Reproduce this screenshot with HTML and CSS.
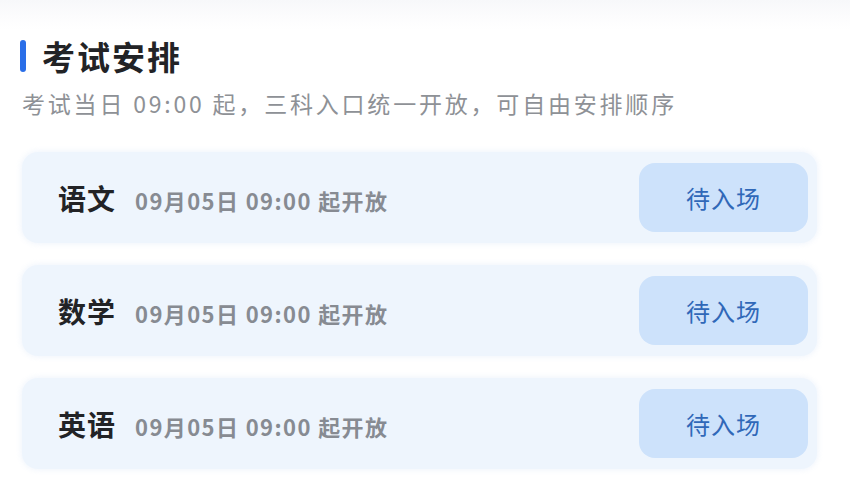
FILE: index.html
```html
<!DOCTYPE html>
<html lang="zh-CN">
<head>
<meta charset="utf-8">
<link rel="stylesheet" href="styles.css">
</head>
<body>
<div class="page">
  <div class="header">
    <span class="bar"></span>
    <h1 class="title">考试安排</h1>
  </div>
  <p class="subtitle">考试当日 09:00 起，三科入口统一开放，可自由安排顺序</p>
  <div class="list">
    <div class="card">
      <div class="info"><span class="subject">语文</span><span class="time">09月05日 09:00 起开放</span></div>
      <div class="btn">待入场</div>
    </div>
    <div class="card">
      <div class="info"><span class="subject">数学</span><span class="time">09月05日 09:00 起开放</span></div>
      <div class="btn">待入场</div>
    </div>
    <div class="card">
      <div class="info"><span class="subject">英语</span><span class="time">09月05日 09:00 起开放</span></div>
      <div class="btn">待入场</div>
    </div>
  </div>
</div>
</body>
</html>
```
FILE: styles.css
```css
html, body {
  margin: 0;
  padding: 0;
}
body {
  width: 850px;
  height: 478px;
  overflow: hidden;
  background: linear-gradient(180deg, #f7f8fa 0px, #fcfcfd 16px, #ffffff 30px);
  font-family: "Noto Sans CJK SC", "Noto Sans", sans-serif;
}
.page {
  padding: 40px 33px 0 20px;
}
.header {
  display: flex;
  align-items: center;
  gap: 16px;
  height: 32px;
}
.bar {
  width: 6px;
  height: 32px;
  border-radius: 3px;
  background: #2a6ee8;
}
.title {
  margin: 0;
  font-size: 33px;
  line-height: 32px;
  font-weight: 700;
  color: #222326;
  letter-spacing: 2px;
}
.subtitle {
  margin: 16px 0 0 2px;
  font-size: 23px;
  line-height: 30px;
  color: #8e9196;
  letter-spacing: 2.8px;
  font-weight: 400;
}
.list {
  margin: 34px 0 0 2px;
  display: flex;
  flex-direction: column;
  gap: 22px;
}
.card {
  height: 91px;
  box-sizing: border-box;
  border-radius: 16px;
  background: #eef5fd;
  box-shadow: 0 0 6px rgba(220, 232, 248, 0.6);
  display: flex;
  align-items: center;
  justify-content: space-between;
  padding: 0 9px 0 36px;
}
.info {
  display: flex;
  align-items: baseline;
  gap: 19px;
}
.subject {
  font-size: 28px;
  font-weight: 700;
  color: #222326;
  letter-spacing: 1px;
}
.time {
  font-size: 22px;
  font-weight: 700;
  color: #878b92;
  letter-spacing: 1.4px;
}
.btn {
  width: 169px;
  height: 69px;
  border-radius: 16px;
  background: #cde2fb;
  color: #3068b8;
  font-size: 24px;
  letter-spacing: 1px;
  display: flex;
  align-items: center;
  justify-content: center;
}
```
